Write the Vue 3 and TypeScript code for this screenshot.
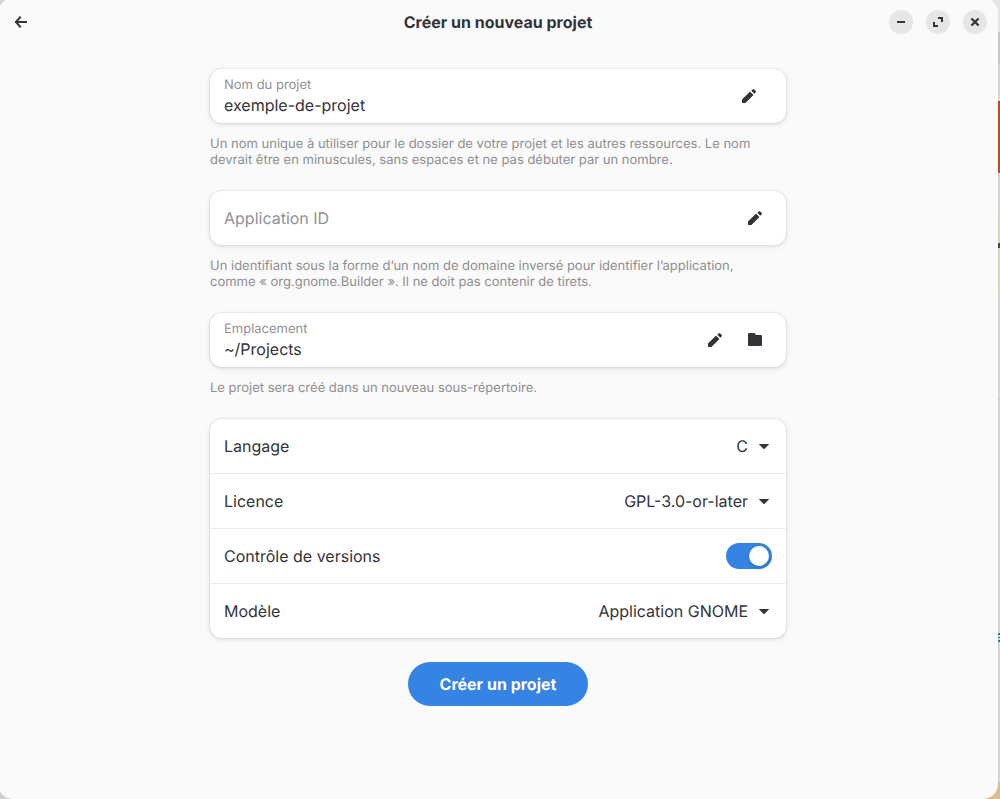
<script setup lang="ts">
import { ref } from 'vue'

interface Choice {
  id: string
  label: string
  options: string[]
}

const name = ref('exemple-de-projet')
const appId = ref('')
const location = ref('~/Projects')
const versionControl = ref(true)

const language: Choice = { id: 'language', label: 'Langage', options: ['C', 'C++', 'Python', 'Rust', 'Vala'] }
const licence: Choice = { id: 'licence', label: 'Licence', options: ['GPL-3.0-or-later', 'LGPL-3.0-or-later', 'MIT'] }
const template: Choice = { id: 'template', label: 'Modèle', options: ['Application GNOME', 'Bibliothèque partagée'] }

const rows: (Choice | null)[] = [language, licence, null, template]
const selected = ref<Record<string, string>>({
  language: 'C',
  licence: 'GPL-3.0-or-later',
  template: 'Application GNOME',
})

const pencil =
  'M1 15 V11.6 L8.6 4 Q9 3.6 9.4 4 L12 6.6 Q12.4 7 12 7.4 L4.4 15 Z M10.3 2.7 L11.6 1.4 Q12.4 .7 13.2 1.4 L14.6 2.8 Q15.3 3.6 14.6 4.4 L13.3 5.7 Z'
</script>

<template>
  <div class="desktop">
    <div class="window">
      <header class="titlebar">
        <button class="back" type="button" aria-label="Retour">
          <svg width="16" height="16" viewBox="0 0 16 16"><path d="M7 3.4 L3 8 L7 12.6 M3 8 H13" fill="none" stroke="currentColor" stroke-width="2" stroke-linecap="square" /></svg>
        </button>
        <h1>Créer un nouveau projet</h1>
        <div class="controls">
          <button type="button" aria-label="Réduire">
            <svg width="16" height="16" viewBox="0 0 16 16"><path d="M4 7 H12 V9 H4 Z" fill="currentColor" /></svg>
          </button>
          <button type="button" aria-label="Agrandir">
            <svg width="16" height="16" viewBox="0 0 16 16"><path d="M8 3 H13 V8 H11 V5 H8 Z M3 8 H5 V11 H8 V13 H3 Z" fill="currentColor" /></svg>
          </button>
          <button type="button" aria-label="Fermer">
            <svg width="16" height="16" viewBox="0 0 16 16"><path d="M5.2 5.2 L10.8 10.8 M10.8 5.2 L5.2 10.8" fill="none" stroke="currentColor" stroke-width="2.2" stroke-linecap="square" /></svg>
          </button>
        </div>
      </header>

      <form class="page" @submit.prevent>
        <section>
          <div class="card entry name-entry">
            <div class="field">
              <label for="name">Nom du projet</label>
              <input id="name" v-model="name" type="text" spellcheck="false" />
            </div>
            <svg class="icon" viewBox="0 0 16 16"><path :d="pencil" /></svg>
          </div>
          <p>Un nom unique à utiliser pour le dossier de votre projet et les autres ressources. Le nom devrait être en minuscules, sans espaces et ne pas débuter par un nombre.</p>
        </section>

        <section>
          <div class="card entry">
            <div class="field">
              <input id="app-id" v-model="appId" type="text" placeholder="Application ID" aria-label="Application ID" />
            </div>
            <svg class="icon" viewBox="0 0 16 16"><path :d="pencil" /></svg>
          </div>
          <p>Un identifiant sous la forme d’un nom de domaine inversé pour identifier l’application, comme « org.gnome.Builder ». Il ne doit pas contenir de tirets.</p>
        </section>

        <section>
          <div class="card entry">
            <div class="field">
              <label for="location">Emplacement</label>
              <input id="location" v-model="location" type="text" spellcheck="false" />
            </div>
            <svg class="icon" viewBox="0 0 16 16"><path :d="pencil" /></svg>
            <button class="browse" type="button" aria-label="Choisir un dossier">
              <svg class="icon" viewBox="0 0 16 16"><path d="M2 1 H7 Q7.6 1 8 1.5 L8.6 2.4 Q9 3 9.8 3 H14 Q15 3 15 4 V13 Q15 14 14 14 H2 Q1 14 1 13 V2 Q1 1 2 1 Z" /></svg>
            </button>
          </div>
          <p>Le projet sera créé dans un nouveau sous-répertoire.</p>
        </section>

        <div class="card list">
          <template v-for="row in rows" :key="row ? row.id : 'vcs'">
            <div v-if="row" class="row">
              <label :for="row.id">{{ row.label }}</label>
              <div class="choice">
                <select :id="row.id" v-model="selected[row.id]">
                  <option v-for="option in row.options" :key="option">{{ option }}</option>
                </select>
                <svg class="icon" viewBox="0 0 16 16"><path d="M3.4 6 H12.6 Q13.4 6 12.8 6.6 L8.6 10.7 Q8 11.2 7.4 10.7 L3.2 6.6 Q2.6 6 3.4 6 Z" /></svg>
              </div>
            </div>
            <div v-else class="row">
              <label for="vcs">Contrôle de versions</label>
              <input id="vcs" v-model="versionControl" class="switch" type="checkbox" role="switch" />
            </div>
          </template>
        </div>

        <button class="create" type="submit">Créer un projet</button>
      </form>
    </div>
  </div>
</template>

<style>
body {
  margin: 0;
}
</style>

<style scoped>
* {
  box-sizing: border-box;
}

.desktop {
  min-height: 100vh;
  overflow: hidden;
  padding-right: 2px;
  display: flex;
  background: linear-gradient(
    #e4e4e4 32px, #c6c6c6 32px 64px, #d5d5d5 64px 101px, #c9471d 101px 173px,
    #d3d3d3 173px 216px, #d6d9b9 216px 243px, #4a4a42 243px 248px, #d6d9b9 248px 295px,
    #d4d4d4 295px 399px, #c4c4c4 399px 400px, #d4d4d4 400px 633px, #2b7a92 633px 635px,
    #c4d4d8 635px 637px, #2b7a92 637px 638px, #c4d4d8 638px 640px, #2b7a92 640px 642px,
    #d4d4d4 642px 782px, #dfbd8b 782px
  ) right / 14px 100% no-repeat #d0d0d0;
}

.window {
  flex: 1;
  margin: -2px 0 0 -2px;
  border-radius: 15px;
  background: #fafafa;
  color: #333338;
  font-family: Inter, "Noto Sans", sans-serif;
  font-size: 16px;
  line-height: 20px;
  text-rendering: geometricPrecision;
}

.titlebar {
  display: grid;
  grid-template-columns: 1fr auto 1fr;
  align-items: center;
  height: 48px;
  padding: 0 11px;
}

h1 {
  margin: 0;
  font-size: 16px;
  font-weight: 700;
}

button {
  display: grid;
  place-items: center;
  padding: 0;
  border: 0;
  background: none;
  color: inherit;
  font: inherit;
  text-rendering: inherit;
}

.back {
  width: 24px;
  height: 24px;
}

.controls {
  display: flex;
  justify-content: flex-end;
  gap: 13px;
}

.controls button {
  width: 24px;
  height: 24px;
  border-radius: 50%;
  background: #e6e6e6;
}

.page {
  display: flex;
  flex-direction: column;
  max-width: 576px;
  margin: 0 auto;
  padding: 23px 0 48px;
}

.card {
  border-radius: 12px;
  background: #fff;
  box-shadow: 0 0 0 1px rgba(0, 0, 6, 0.03), 0 1px 3px 1px rgba(0, 0, 6, 0.07), 0 2px 6px 2px rgba(0, 0, 6, 0.03);
}

.entry {
  display: flex;
  align-items: center;
  gap: 24px;
  height: 54px;
  padding: 0 23px 0 14px;
}

.name-entry {
  padding-right: 29px;
}

.field {
  flex: 1;
  display: flex;
  flex-direction: column;
  gap: 2px;
}

.field label {
  color: #909092;
  font-size: 13px;
  line-height: 16px;
}

.field input {
  width: 100%;
  height: 20px;
  padding: 0;
  border: 0;
  outline: 0;
  background: none;
  color: inherit;
  font: inherit;
  text-rendering: inherit;
}

.field input::placeholder {
  color: #909092;
  opacity: 1;
}

.icon {
  display: block;
  flex: none;
  width: 16px;
  height: 16px;
  fill: currentColor;
}

p {
  margin: 13px 0 23px;
  padding-right: 12px;
  color: #8e8e90;
  font-size: 13px;
  line-height: 16px;
}

.row {
  display: flex;
  align-items: center;
  justify-content: space-between;
  height: 54px;
  padding: 0 14px;
}

.row + .row {
  height: 55px;
  border-top: 1px solid #ebebeb;
}

.choice {
  display: grid;
  align-items: center;
}

.choice > * {
  grid-area: 1 / 1;
}

.choice .icon {
  justify-self: end;
  pointer-events: none;
}

select {
  appearance: none;
  field-sizing: content;
  padding: 0 24px 0 0;
  border: 0;
  background: none;
  color: inherit;
  font: inherit;
  text-align-last: right;
  text-rendering: inherit;
}

.switch {
  appearance: none;
  display: flex;
  width: 46px;
  height: 26px;
  margin: 0;
  padding: 3px;
  border-radius: 13px;
  background: #c8c8c8;
}

.switch::before {
  content: "";
  width: 20px;
  height: 20px;
  border-radius: 50%;
  background: #fff;
  box-shadow: 0 2px 4px rgba(0, 0, 6, 0.2);
}

.switch:checked {
  justify-content: flex-end;
  background: #3584e4;
}

.create {
  align-self: center;
  height: 44px;
  margin-top: 24px;
  padding: 0 32px;
  border-radius: 22px;
  background: #3584e4;
  color: #fff;
  font-weight: 700;
}
</style>
